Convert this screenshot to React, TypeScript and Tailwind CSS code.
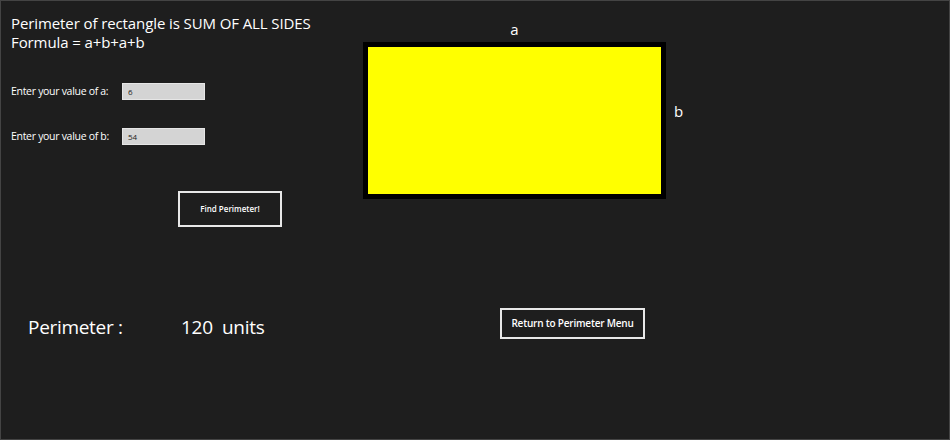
import React from 'react';

const App: React.FC = () => {
  return (
    <div
      className="w-[950px] h-[440px] bg-[#1e1e1e] border border-[#444444] text-white flex flex-col font-['Open_Sans',sans-serif]"
    >
      {/* Top area */}
      <div className="flex h-[295px]">
        {/* Left column */}
        <div className="w-[352px] pl-[10px] pt-[13px] flex flex-col">
          <div className="text-[15px] leading-[19px] tracking-[-0.1px]">
            <div>Perimeter of rectangle is SUM OF ALL SIDES</div>
            <div>Formula = a+b+a+b</div>
          </div>

          <div className="mt-[31px] flex items-center h-[17px]">
            <span className="w-[111px] text-[10.5px] tracking-[-0.3px]">Enter your value of a:</span>
            <input
              readOnly
              value="6"
              className="w-[83px] h-[17px] bg-[#d4d4d4] border border-[#e6e6e6] text-[#222] text-[8px] pl-[5px] outline-none"
            />
          </div>

          <div className="mt-[28px] flex items-center h-[17px]">
            <span className="w-[111px] text-[10.5px] tracking-[-0.3px]">Enter your value of b:</span>
            <input
              readOnly
              value="54"
              className="w-[83px] h-[17px] bg-[#d4d4d4] border border-[#e6e6e6] text-[#222] text-[8px] pl-[5px] outline-none"
            />
          </div>

          <div className="mt-[46px] pl-[167px]">
            <button className="w-[104px] h-[36px] border-2 border-[#e8e8e8] bg-[#1e1e1e] text-[8px] font-semibold">
              Find Perimeter!
            </button>
          </div>
        </div>

        {/* Rectangle figure */}
        <div className="pl-[10px] pt-[18px] flex">
          <div className="flex flex-col items-center">
            <div className="h-[23px] text-[15px] leading-[20px]">a</div>
            <div className="w-[303px] h-[157px] bg-[#ffff00] border-[5px] border-black" />
          </div>
          <div className="pl-[8px] pt-[82px] text-[15px] leading-[20px]">b</div>
        </div>
      </div>

      {/* Bottom area */}
      <div className="flex items-start mt-[12px]">
        <div className="pl-[27px] w-[499px] flex items-center h-[31px] pt-[7px] text-[19px] tracking-[-0.3px]">
          <span className="w-[153px]">Perimeter :</span>
          <span>120&nbsp;&nbsp;units</span>
        </div>
        <button className="w-[145px] h-[31px] border-2 border-[#e8e8e8] text-[10px] font-semibold tracking-[-0.2px]">
          Return to Perimeter Menu
        </button>
      </div>
    </div>
  );
};

export default App;
